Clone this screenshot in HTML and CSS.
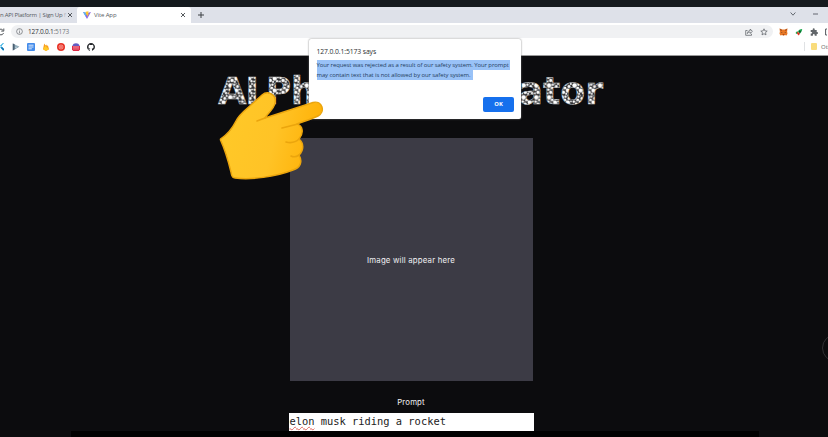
FILE: index.html
```html
<!DOCTYPE html>
<html lang="en">
<head>
<meta charset="utf-8">
<title>Vite App</title>
<link rel="stylesheet" href="styles.css">
</head>
<body>
<div class="screen">
  <header class="browser">
    <div class="tabs">
      <div class="tab tab-back"><span class="tab-cut">n API Platform | Sign Up <i>f</i></span><svg class="close" viewBox="0 0 6 6"><path d="M1 1l4 4M5 1L1 5"/></svg></div>
      <div class="tab tab-active">
        <svg class="vite" viewBox="0 0 8 8"><path fill="#8b68e8" d="M0 1l4 7 4-7-4 1z"/><path fill="#55b8ef" d="M0 1l3 5-.2-4.5z"/><path fill="#ffc52c" d="M2.7.8L5.6.2 5 2.5l1 .1L4 6l.2-2.4-1.2.2z"/></svg>
        <span class="tab-title">Vite App</span>
        <svg class="close" viewBox="0 0 6 6"><path d="M1 1l4 4M5 1L1 5"/></svg>
      </div>
      <svg class="plus" viewBox="0 0 6 6"><path d="M3 0v6M0 3h6"/></svg>
      <div class="window-controls">
        <svg width="6" height="6" viewBox="0 0 6 6"><path d="M.6 1.5L3 4.2l2.4-2.7"/></svg>
        <svg width="5" height="6" viewBox="0 0 5 6"><path d="M0 3h5"/></svg>
      </div>
    </div>
    <div class="toolbar">
      <svg class="reload" viewBox="0 0 5 8"><path d="M0 1.2A3 3 0 0 1 3.2 2.6M0 6.8A3 3 0 0 0 3.6 5M3.8.5v2.6H1.200"/></svg>
      <div class="address">
        <svg class="info" viewBox="0 0 8 8"><circle cx="4" cy="4" r="3.3"/><path d="M4 3.600v2.400M4 1.900v.9"/></svg>
        <span class="url">127.0.0.1<i>:5173</i></span>
        <svg class="share" viewBox="0 0 8 8"><path d="M2.5 2.5H.7v4.800h5.800V5.800M2.300 5.600C2.500 3.400 4 2.500 5.200 2.500V1l2.200 2.400-2.200 2V4C4 4 3 4.400 2.300 5.600z"/></svg>
        <svg class="star" viewBox="0 0 8 8"><path d="M4 .8l.9 2.100 2.300.2-1.700 1.500.5 2.300-2-1.200-2 1.200.5-2.300L.8 3.100l2.300-.2z"/></svg>
      </div>
      <div class="extensions">
        <svg width="9" height="8" viewBox="0 0 9 8"><path fill="#e97825" d="M.5.4l2.5 1h3l2.5-1-.4 3.2.4 2.2-.9 1.7-2-.5-.6.6H4l-.6-.6-2 .5-.9-1.7.4-2.2z"/><path fill="#a64a19" d="M.7.6l2.5 1.3L2 3.2zM8.3.6L5.8 1.9 7 3.2zM3.7 6h1.6v1.2H3.7z"/><path fill="#333" d="M2.3 4.1l1.2.6-.9.2zM6.7 4.1l-1.2.6.9.2z"/></svg>
        <svg width="8" height="8" viewBox="0 0 8 8"><path fill="#16a64a" d="M.5 5L2.2 3l1 2-1.4 1zM3 3.2C4 1.6 5.5 1 7.2.9 7 3 6.2 4.5 4.5 6z"/><path fill="#df3422" d="M2.6 3.5L5 5.8 3.6 7.5 2 5.6z"/><path fill="#152725" d="M4 2.8l1.8.1-1 2z"/></svg>
        <svg width="8" height="8" viewBox="0 0 8 8"><path fill="#62666a" d="M.7 2h2V1.2a1 1 0 0 1 2 0V2h2v2h.4a1 1 0 0 1 0 2h-.4v1.8h-2V7a.9.9 0 0 0-1.8 0v.8H.7V5.6h.7a.8.8 0 0 0 0-1.6H.7z"/></svg>
        <svg width="2" height="8" viewBox="0 0 2 8"><path fill="none" stroke="#55595e" d="M2 1H.6v6H2"/></svg>
      </div>
    </div>
    <div class="bookmarks">
      <svg width="4" height="8" viewBox="0 0 4 8"><path fill="#25a9e0" d="M3 0h1L1 3.4 0 2.7zM0 4.1l1.7-.6L4 6v1.6H2.8z"/><path fill="#176eac" d="M1 5l1-1 2 2v1H3z"/></svg>
      <svg width="8" height="8" viewBox="0 0 8 8"><path fill="#8199a8" d="M.8.4L7.4 3.7.8 7.6z"/><path fill="#4a6072" d="M.8.4l1.700.8v5.400L.8 7.6z"/><path stroke="#c7e3ed" stroke-width=".6" d="M3 3h3M3 4.5h2"/></svg>
      <svg width="8" height="8" viewBox="0 0 8 8"><rect width="8" height="8" rx="1" fill="#438bea"/><path stroke="#fff" stroke-width=".8" d="M1.5 2.2h5M1.5 4h5M1.5 5.8h3.3"/></svg>
      <svg width="8" height="8" viewBox="0 0 8 8"><path fill="#f99d1c" d="M1 6.3L2.2.5l1.4 2 .7-1 .7 1.5.9-.8L7 6.3 4 8z"/><path fill="#ffc928" d="M1 6.3l2.4-3.5L7 6.3 4 8z"/></svg>
      <svg width="8" height="8" viewBox="0 0 8 8"><circle cx="4" cy="4" r="4" fill="#e83226"/><circle cx="4" cy="4" r="2" fill="none" stroke="#ffd7d2" stroke-width=".6"/><circle cx="4" cy="4" r=".8" fill="#ffd7d2"/></svg>
      <svg width="8" height="8" viewBox="0 0 8 8"><path fill="#625cc2" d="M.3 3C1 .8 2.2.2 4 .2S7 .8 7.7 3z"/><path fill="#dc2945" d="M0 3h8v3.4L6.8 8H1.2L0 6.4z"/><path stroke="#ffd8d9" stroke-width=".7" d="M1 4h6M2 5.2v1.4M4 5.2v1.4M6 5.2v1.4"/></svg>
      <svg width="8" height="8" viewBox="0 0 16 16"><path fill="#202327" d="M8 0C3.58 0 0 3.58 0 8c0 3.54 2.29 6.53 5.47 7.59.4.07.55-.17.55-.38v-1.49c-2.01.37-2.53-.49-2.69-.94-.09-.23-.48-.94-.82-1.13-.28-.15-.68-.52-.01-.53.63-.01 1.08.58 1.23.82.72 1.21 1.87.87 2.33.66.07-.52.28-.87.51-1.07-1.78-.2-3.64-.89-3.64-3.95 0-.87.31-1.59.82-2.15-.08-.2-.36-1.02.08-2.12 0 0 .67-.21 2.2.82a7.5 7.5 0 0 1 4 0c1.53-1.04 2.2-.82 2.2-.82.44 1.1.16 1.92.08 2.12.51.56.82 1.27.82 2.15 0 3.07-1.87 3.75-3.65 3.95.29.25.54.73.54 1.48v2.2c0 .21.15.46.55.38A8 8 0 0 0 16 8c0-4.42-3.58-8-8-8z"/></svg>
      <div class="other"><b></b><span>Other</span></div>
    </div>
  </header>

  <main class="page">
    <svg class="title" width="392" height="40" viewBox="0 0 392 40" role="heading" aria-label="AI Photo Generator">
      <defs><pattern id="pebbles" width="15" height="14" patternUnits="userSpaceOnUse" patternTransform="scale(.85)">
        <rect width="15" height="14" fill="#29292b"/>
        <g fill="#fff"><circle cx="3" cy="3" r="2.7"/><circle cx="7.5" cy="2" r="1.4"/><circle cx="11.5" cy="4" r="1.8"/><circle cx="6.7" cy="6" r="1.7"/><circle cx="2" cy="8" r="1.5"/><circle cx="10.2" cy="9" r="2.500"/><circle cx="5" cy="11" r="2"/><circle cx="13.800" cy="7.7" r="1.1"/><circle cx="13.700" cy="1.300" r="1.2"/><circle cx="1.300" cy="12.300" r="1.2"/><circle cx="8.300" cy="12.700" r="1.2"/><circle cx="13" cy="12" r="1.4"/><circle cx="4.500" cy="8" r=".7"/><circle cx="10" cy="1" r=".8"/></g>
      </pattern></defs>
      <g class="title-text"><text x="3" y="33" textLength="41" lengthAdjust="spacing">AI</text><text x="51" y="33" textLength="113" lengthAdjust="spacingAndGlyphs">Photo</text><text x="181" y="33" textLength="207" lengthAdjust="spacingAndGlyphs">Generator</text></g>
    </svg>
    <section class="preview"><span>Image will appear here</span></section>
    <label class="prompt-label" for="prompt">Prompt</label>
    <div class="prompt-input" id="prompt"><u>elon</u> musk riding a rocket</div>
  </main>

  <section class="dialog" role="dialog">
    <h2>127.0.0.1:5173 says</h2>
    <p><mark class="line-one">Your request was rejected as a result of our safety system. Your prompt</mark><mark class="line-two">may contain text that is not allowed by our safety system.</mark></p>
    <button>OK</button>
  </section>

  <svg class="hand" width="112" height="96" viewBox="0 0 112 96">
    <defs><linearGradient id="skin" x1="0" y1="0.3" x2="1" y2="0.5"><stop offset="0" stop-color="#ffc928"/><stop offset=".55" stop-color="#ffc326"/><stop offset="1" stop-color="#ffb005"/></linearGradient></defs>
    <path fill="url(#skin)" stroke="#eba50d" stroke-width="1.500" stroke-linejoin="round" d="M5.500 53C13 48 17 43 21 35C25 27 32 23 37 18L47 9C53 4 62 9 60 17C59 23 53 27 50 32L98 16.500C107 14 111 26 103 30C97 33 90 35 82 38C88 40 89 47 84 53C89 57 89 64 84 69C88 76 85 82 78 84C60 91 36 94 20 92C16.500 92 16.500 89 16 86C13 74 11 66 5.500 54Z"/>
    <path fill="none" stroke="#eba50d" stroke-width="1.600" stroke-linecap="round" d="M50 32L42 35M83 38L67 42M84 53Q79 58 71 56M84 69Q80 72 76 70"/>
  </svg>
  <div class="edge-circle"></div>
  <div class="bottom-strip"></div>
</div>
</body>
</html>
```
FILE: styles.css
```css
* { box-sizing: border-box; }
body { margin: 0; background: #0c0c0e; font-family: "Open Sans", sans-serif; }
svg { display: block; flex: none; }
i { font-style: normal; }
.screen { position: relative; width: 828px; height: 437px; overflow: hidden; background: #0c0c0e; }
.browser { height: 56px; padding-top: 7px; background: #14191d; border-bottom: 1px solid #999; }
.tabs { display: flex; height: 16px; background: #dee1e9; }
.tab { display: flex; align-items: center; font-size: 6px; color: #555a61; white-space: nowrap; }
.tab-back { width: 77px; padding-right: 4px; justify-content: space-between; }
.tab-cut { width: 64px; letter-spacing: -.23px; }
.tab-cut i { opacity: .35; }
.close { width: 6px; height: 6px; fill: none; stroke: #44484d; stroke-width: .9; }
.tab-active { width: 114px; padding: 0 5px 0 6px; background: #fff; border-radius: 3px 3px 0 0; }
.vite { width: 8px; height: 8px; margin-right: 3px; }
.tab-title { flex: 1; letter-spacing: -.1px; }
.plus { width: 6px; height: 6px; margin: 5px 0 0 7px; stroke: #3c4045; stroke-width: 1; }
.window-controls { display: flex; gap: 17px; margin: 4px 10px 0 auto; }
.window-controls svg { fill: none; stroke: #555a62; stroke-width: .9; }
.toolbar { display: flex; align-items: center; height: 16px; background: #fff; padding-top: 1px; }
.reload { width: 5px; height: 8px; fill: none; stroke: #55595e; stroke-width: 1; }
.address { display: flex; align-items: center; width: 762px; height: 13px; margin-left: 6px; padding: 0 5px 0 5px; border-radius: 7px; background: #f0f1f3; }
.info, .share, .star { width: 8px; height: 8px; fill: none; stroke: #666a6f; stroke-width: .8; }
.info { width: 7px; height: 7px; }
.share { margin-right: 1px; }
.url { flex: 1; margin-left: 5px; font-size: 6.5px; line-height: 9px; color: #303338; letter-spacing: -.22px; }
.url i { color: #74777c; }
.star { margin-left: 6px; }
.extensions { display: flex; align-items: center; gap: 7px; margin-left: 6px; }
.bookmarks { display: flex; align-items: center; gap: 7px; height: 16px; padding-bottom: 1px; background: #fff; }
.bookmarks > svg:first-child { margin-right: 1px; }
.other { display: flex; align-items: center; gap: 4px; height: 9px; width: 24px; overflow: hidden; margin-left: auto; padding-left: 6px; border-left: 1px solid #e0e2e4; font-size: 6px; color: #666; }
.other b { flex: none; width: 6px; height: 7px; border-radius: 1px; background: #f9dc7c; }
.page { display: flex; flex-direction: column; align-items: center; width: 822px; height: 381px; padding-top: 15px; }
.title { flex: none; }
.title-text { font: 700 37px "DejaVu Sans", sans-serif; fill: url(#pebbles); stroke: #ccc; stroke-width: .4; }
.preview { display: flex; flex: none; align-items: center; justify-content: center; width: 243px; height: 243px; margin-top: 27px; background: #3c3b45; color: #f0f0f2; font: 7.8px Inter, sans-serif; }
.preview span { letter-spacing: .2px; }
.prompt-label { margin-top: 16px; height: 11px; font: 7.8px/11px Inter, sans-serif; letter-spacing: .15px; color: #f0f0f2; }
.prompt-input { width: 245px; height: 18px; margin-top: 5px; padding-left: 1px; background: #fff; color: #222; font: 10.4px/16px "DejaVu Sans Mono", monospace; white-space: pre; }
.prompt-input u { text-decoration: underline wavy #df655e .6px; text-underline-offset: 1px; text-decoration-skip-ink: none; }
.dialog { position: absolute; left: 309px; top: 39px; width: 212px; height: 80px; padding: 8px 7.500px; border-radius: 2px; background: #fff; box-shadow: 0 0 2px #777; }
.dialog h2 { margin: 0; font-size: 6.8px; line-height: 10px; font-weight: 400; letter-spacing: -.1px; color: #2c2f33; }
.dialog p { margin: 3px 0 0; font-size: 5.9px; line-height: 10px; white-space: nowrap; color: #243d60; }
.dialog mark { display: block; height: 10px; background: #99c2f7; color: inherit; letter-spacing: -.06px; }
.line-one { width: 193px; }
.line-two { width: 156px; }
.dialog button { display: block; width: 31px; height: 15px; margin: 17px 0 0 166.500px; padding: 0; border: 0; border-radius: 2px; background: #1670ed; color: #fff; font: 700 5.8px/15px "Open Sans", sans-serif; }
.hand { position: absolute; left: 215px; top: 86px; }
.edge-circle { position: absolute; left: 822px; top: 334px; width: 28px; height: 28px; border: 1px solid #303033; border-radius: 50%; }
.bottom-strip { position: absolute; left: 71px; top: 431px; width: 688px; height: 6px; background: #000; }
```
